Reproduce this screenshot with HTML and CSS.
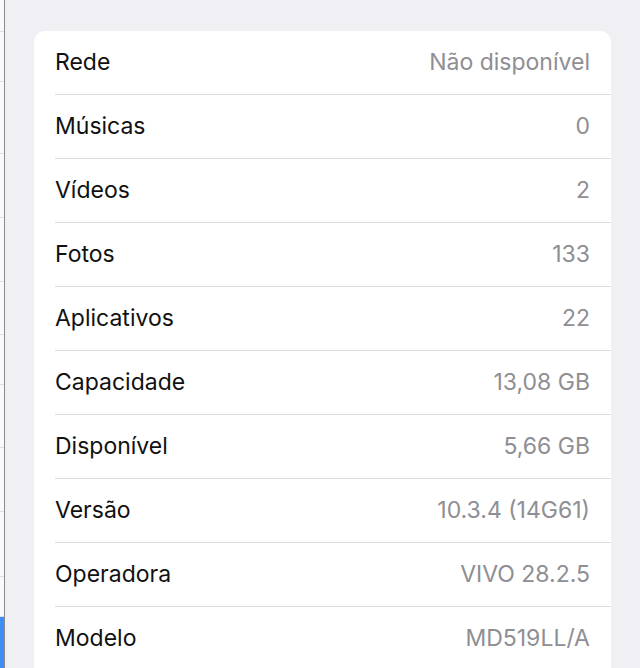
FILE: index.html
```html
<html>
  <head>
    <title>Sobre</title>
    <link rel="stylesheet" href="styles.css">
  </head>
  <body>
    <div class="screen">
      <div class="sidebar">
        <div class="sideRow" style="height: 32px"></div>
        <div class="sideRow" style="height: 50px"></div>
        <div class="sideRow" style="height: 72px"></div>
        <div class="sideRow" style="height: 64px"></div>
        <div class="sideRow" style="height: 64px"></div>
        <div class="sideRow" style="height: 53px"></div>
        <div class="sideRow" style="height: 50px"></div>
        <div class="sideRow" style="height: 63px"></div>
        <div class="sideRow" style="height: 64px"></div>
        <div class="sideRow" style="height: 65px"></div>
        <div class="sideRow" style="height: 40px"></div>
        <div class="sideRow selected"></div>
      </div>

      <div class="content">
        <div class="card">
          <div class="row"><span class="label">Rede</span><span class="value">Não disponível</span></div>
          <div class="row"><span class="label">Músicas</span><span class="value">0</span></div>
          <div class="row"><span class="label">Vídeos</span><span class="value">2</span></div>
          <div class="row"><span class="label">Fotos</span><span class="value">133</span></div>
          <div class="row"><span class="label">Aplicativos</span><span class="value">22</span></div>
          <div class="row"><span class="label">Capacidade</span><span class="value">13,08 GB</span></div>
          <div class="row"><span class="label">Disponível</span><span class="value">5,66 GB</span></div>
          <div class="row"><span class="label">Versão</span><span class="value">10.3.4 (14G61)</span></div>
          <div class="row"><span class="label">Operadora</span><span class="value">VIVO 28.2.5</span></div>
          <div class="row"><span class="label">Modelo</span><span class="value">MD519LL/A</span></div>
        </div>
      </div>
    </div>
  </body>
</html>
```

FILE: styles.css
```css
body {
	margin: 0;
	background-color: #efeff4;
	font-family: "Inter", "Liberation Sans", sans-serif;
	overflow: hidden;
}

.screen {
	display: flex;
	height: 668px;
	overflow: hidden;
}

.sidebar {
	width: 4px;
	background-color: #fafafa;
	border-right: 1px solid #8a8a8e;
	display: flex;
	flex-direction: column;
}
.sideRow {
	border-bottom: 1px solid #dedee2;
	box-sizing: border-box;
	flex-shrink: 0;
}
.sideRow.selected {
	flex: 1;
	background-color: #3d8ef7;
	border-bottom: none;
}

.content {
	flex: 1;
	display: flex;
	flex-direction: column;
	padding: 31px 29px 0 29px;
}

.card {
	flex: 1;
	overflow: hidden;
	background-color: white;
	border-radius: 11px 11px 0 0;
}

.row {
	display: flex;
	justify-content: space-between;
	align-items: center;
	height: 64px;
	margin-left: 21px;
	padding-right: 21px;
	padding-bottom: 2px;
	border-bottom: 1px solid #dcdce0;
	box-sizing: border-box;
	font-size: 23px;
	font-weight: 400;
}
.label {
	color: #111;
}
.value {
	color: #8e8e93;
}
```
